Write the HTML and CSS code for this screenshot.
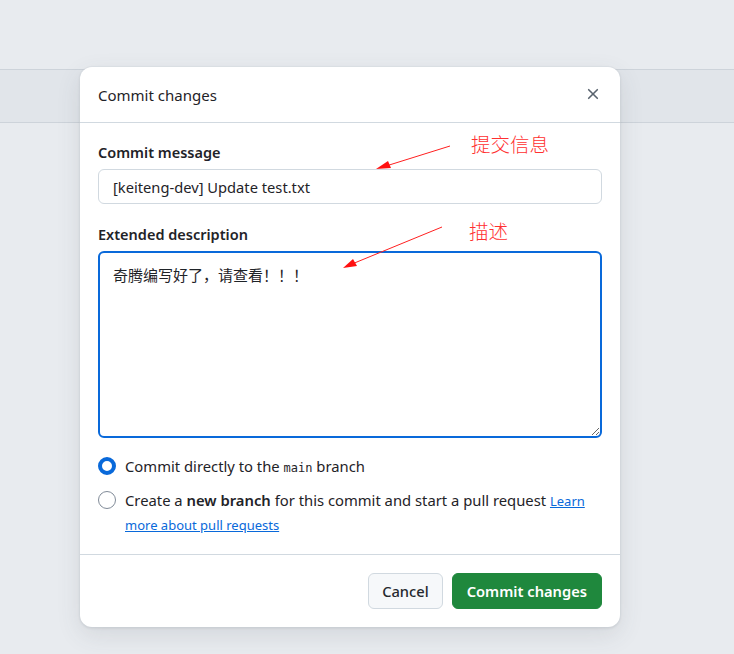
FILE: index.html
```html
<!DOCTYPE html>
<html lang="zh">

<head>
    <meta charset="UTF-8">
    <meta name="viewport" content="width=device-width, initial-scale=1.0">
    <title>Commit changes</title>
    <link rel="stylesheet" href="styles.css">
</head>

<body>
    <div class="page">
        <div class="page-top"></div>
        <div class="page-bar"></div>
    </div>

    <div class="dialog">
        <div class="dialog-header">
            <h1>Commit changes</h1>
            <button class="close-btn" aria-label="Close">
                <svg width="16" height="16" viewBox="0 0 16 16">
                    <path d="M3.7 3.7l8.6 8.6M12.3 3.7l-8.6 8.6" stroke="#59636e" stroke-width="1.6" stroke-linecap="round" fill="none"/>
                </svg>
            </button>
        </div>

        <div class="dialog-body">
            <label class="field-label">Commit message</label>
            <input type="text" class="text-input" value="[keiteng-dev] Update test.txt">

            <label class="field-label label-2">Extended description</label>
            <textarea class="text-area">奇腾编写好了，请查看！！！</textarea>

            <div class="radio-row">
                <span class="radio checked"></span>
                <span class="radio-text">Commit directly to the <code>main</code> branch</span>
            </div>
            <div class="radio-row">
                <span class="radio"></span>
                <span class="radio-text">Create a <b>new branch</b> for this commit and start a pull request <a href="#">Learn more about pull requests</a></span>
            </div>
        </div>

        <div class="dialog-footer">
            <button class="btn btn-cancel">Cancel</button>
            <button class="btn btn-primary">Commit changes</button>
        </div>
    </div>

    <!-- annotations -->
    <svg class="arrows" width="734" height="654" viewBox="0 0 734 654">
        <line x1="450" y1="146" x2="386" y2="166" stroke="#ff2020" stroke-width="1"/>
        <polygon points="376,169 388,161 391,168" fill="#ff1010"/>
        <line x1="442" y1="227" x2="352" y2="264" stroke="#ff2020" stroke-width="1"/>
        <polygon points="343,268 353,259 357,266" fill="#ff1010"/>
    </svg>
    <div class="note note-1">提交信息</div>
    <div class="note note-2">描述</div>
</body>

</html>
```

FILE: styles.css
```css
body {
    margin: 0;
    font-family: "Noto Sans", "Noto Sans CJK SC", sans-serif;
    color: #1f2328;
    background-color: #e8ebef;
    width: 734px;
    height: 654px;
    overflow: hidden;
    position: relative;
}

.page-top {
    height: 69px;
}

.page-bar {
    height: 52px;
    background-color: #e1e5ea;
    border-top: 1px solid #cdd3da;
    border-bottom: 1px solid #cdd3da;
}

.dialog {
    position: absolute;
    left: 80px;
    top: 67px;
    width: 540px;
    height: 560px;
    background: #fff;
    border-radius: 12px;
    box-shadow: 0 0 0 1px rgba(208, 215, 222, 0.3), 0 8px 24px rgba(66, 74, 83, 0.12), 0 1px 3px rgba(31, 35, 40, 0.12);
    display: flex;
    flex-direction: column;
}

.dialog-header {
    height: 55px;
    display: flex;
    align-items: center;
    justify-content: space-between;
    padding: 0 18px;
    border-bottom: 1px solid #d1d9e0;
}

.dialog-header h1 {
    margin: 0;
    font-size: 15px;
    font-weight: 400;
    color: #1f2328;
}

.close-btn {
    border: none;
    background: none;
    padding: 0;
    width: 16px;
    height: 16px;
    margin-right: 1px;
    margin-top: -2px;
}

.dialog-body {
    flex: 1;
    padding: 20px 18px 0;
}

.field-label {
    display: block;
    font-size: 14.5px;
    font-weight: 600;
    line-height: 18px;
    margin-bottom: 8px;
}

.label-2 {
    margin-bottom: 8px;
}

.text-input {
    box-sizing: border-box;
    display: block;
    width: 504px;
    height: 35px;
    border: 1px solid #d1d9e0;
    border-radius: 6px;
    padding: 0 14px;
    font-family: inherit;
    font-size: 14.7px;
    color: #1f2328;
    margin-bottom: 21px;
}

.text-area {
    box-sizing: border-box;
    display: block;
    width: 504px;
    height: 187px;
    border: 2px solid #0969da;
    border-radius: 6px;
    padding: 12px 13px;
    font-family: inherit;
    font-size: 15px;
    line-height: 20px;
    color: #1f2328;
    resize: vertical;
    outline: none;
    margin-bottom: 16px;
}

.radio-row {
    display: flex;
    align-items: flex-start;
    gap: 9px;
    font-size: 14.8px;
    line-height: 24px;
    color: #1f2328;
    margin-bottom: 10px;
}

.radio-text {
    line-height: 24px;
}

.radio {
    flex: none;
    box-sizing: border-box;
    width: 18px;
    height: 18px;
    margin-top: 3px;
    border-radius: 50%;
    border: 1px solid #818b98;
    background: #fff;
}

.radio.checked {
    border: 4px solid #0969da;
}

code {
    font-family: "DejaVu Sans Mono", monospace;
    font-size: 12px;
    line-height: 1;
}

b {
    font-weight: 600;
}

a {
    color: #0969da;
    font-size: 13px;
    line-height: 1;
    text-decoration: underline;
}

.dialog-footer {
    height: 72px;
    border-top: 1px solid #d1d9e0;
    display: flex;
    justify-content: flex-end;
    align-items: center;
    gap: 9px;
    padding: 0 18px;
}

.btn {
    height: 36px;
    padding: 0 14px;
    border-radius: 6px;
    border: 1px solid #d1d9e0;
    background: #f6f8fa;
    color: #25292e;
    font-family: inherit;
    font-size: 14.7px;
    font-weight: 500;
    margin-top: -1px;
}

.btn-cancel {
    padding: 0 13px;
}

.btn-primary {
    background: #1f883d;
    border-color: #1f883d;
    color: #fff;
    font-weight: 600;
}

.arrows {
    position: absolute;
    left: 0;
    top: 0;
}

.note {
    position: absolute;
    color: #ff3030;
    font-family: "Noto Sans CJK SC", serif;
    font-size: 19.5px;
    font-weight: 300;
    line-height: 22px;
}

.note-1 {
    left: 471px;
    top: 133px;
}

.note-2 {
    left: 469px;
    top: 220px;
}
```
